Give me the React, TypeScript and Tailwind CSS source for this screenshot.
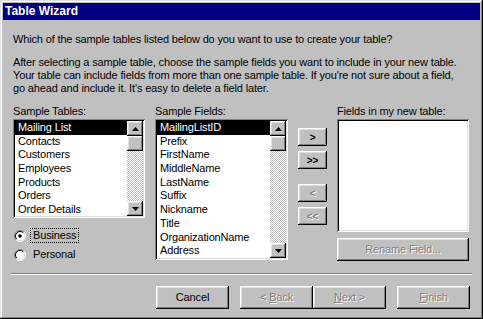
const raised =
  "bg-[#c0c0c0] shadow-[inset_-1px_-1px_#000,inset_1px_1px_#fff,inset_-2px_-2px_#808080,inset_2px_2px_#dfdfdf]";
const sunken =
  "shadow-[inset_1px_1px_#808080,inset_-1px_-1px_#fff,inset_2px_2px_#000,inset_-2px_-2px_#dfdfdf]";
const disabled = "text-[#808080] [text-shadow:1px_1px_0_#fff]";

const Tri = ({ up }: { up?: boolean }) => (
  <svg width="7" height="4" viewBox="0 0 7 4">
    {up ? <path d="M3.5 0 L7 4 L0 4 Z" fill="#000" /> : <path d="M0 0 L7 0 L3.5 4 Z" fill="#000" />}
  </svg>
);

const Scrollbar = () => (
  <div className="flex w-[16px] flex-col">
    <div className={`${raised} flex h-[15px] items-center justify-center`}>
      <Tri up />
    </div>
    <div className={`${raised} h-[15px]`} />
    <div className="flex-1 bg-[repeating-conic-gradient(#c0c0c0_0%_25%,#fff_0%_50%)] bg-[length:2px_2px]" />
    <div className={`${raised} flex h-[15px] items-center justify-center`}>
      <Tri />
    </div>
  </div>
);

const ListBox = ({ items, height }: { items: string[]; height: string }) => (
  <div className={`${sunken} flex bg-white p-[2px] ${height}`}>
    <div className="flex-1 overflow-hidden">
      {items.map((t, i) => (
        <div
          key={t}
          className={`h-[13.7px] pl-[3px] leading-[13.7px] ${i === 0 ? "bg-black text-white" : "text-black"}`}
        >
          {t}
        </div>
      ))}
    </div>
    <Scrollbar />
  </div>
);

const Radio = ({ checked }: { checked?: boolean }) => (
  <svg width="12" height="12" viewBox="0 0 12 12">
    <circle cx="6" cy="6" r="5" fill="#fff" />
    <path d="M2.1 9.9 A5.5 5.5 0 0 1 9.9 2.1" stroke="#808080" fill="none" />
    <path d="M9.9 2.1 A5.5 5.5 0 0 1 2.1 9.9" stroke="#fff" fill="none" />
    <path d="M2.8 9.2 A4.5 4.5 0 0 1 9.2 2.8" stroke="#000" fill="none" />
    <path d="M9.2 2.8 A4.5 4.5 0 0 1 2.8 9.2" stroke="#dfdfdf" fill="none" />
    {checked && <circle cx="6" cy="6" r="1.8" fill="#000" />}
  </svg>
);

const Btn = ({ children, off, className = "" }: { children: React.ReactNode; off?: boolean; className?: string }) => (
  <div className={`${raised} flex items-center justify-center ${off ? disabled : "text-black"} ${className}`}>
    {children}
  </div>
);

export default function App() {
  return (
    <div className="flex h-[319px] w-[483px] flex-col overflow-hidden whitespace-nowrap bg-[#c0c0c0] p-[3px] font-['Liberation_Sans',sans-serif] text-[11px] tracking-[-0.15px] text-black shadow-[inset_-1px_-1px_#000,inset_1px_1px_#dfdfdf,inset_-2px_-2px_#808080,inset_2px_2px_#fff]">
      <div className="h-[17px] shrink-0 bg-[#000080] pl-[2px] text-[12px] font-bold leading-[17px] tracking-normal text-white">
        Table Wizard
      </div>

      <div className="pl-[10px] leading-[13px]">
        <p className="mt-[13px]">Which of the sample tables listed below do you want to use to create your table?</p>
        <p className="mt-[10px]">
          After selecting a sample table, choose the sample fields you want to include in your new table.
          <br />
          Your table can include fields from more than one sample table. If you're not sure about a field,
          <br />
          go ahead and include it. It's easy to delete a field later.
        </p>

        <div className="mt-[10px] flex h-[157px]">
          <div className="w-[132px]">
            <div className="h-[14px]">Sample Tables:</div>
            <ListBox
              height="h-[99px]"
              items={["Mailing List", "Contacts", "Customers", "Employees", "Products", "Orders", "Order Details"]}
            />
            <div className="mt-[10px] flex h-[15px] items-center pl-[1px]">
              <Radio checked />
              <span className="ml-[4px] border border-dotted border-black px-[2px] leading-[13px]">Business</span>
            </div>
            <div className="mt-[4px] flex h-[15px] items-center pl-[1px]">
              <Radio />
              <span className="ml-[7px] leading-[13px]">Personal</span>
            </div>
          </div>

          <div className="ml-[10px] w-[133px]">
            <div className="h-[14px]">Sample Fields:</div>
            <ListBox
              height="h-[141px]"
              items={[
                "MailingListID",
                "Prefix",
                "FirstName",
                "MiddleName",
                "LastName",
                "Suffix",
                "Nickname",
                "Title",
                "OrganizationName",
                "Address",
              ]}
            />
          </div>

          <div className="ml-[10px] flex w-[29px] flex-col pt-[23px] text-[10px] font-bold">
            <Btn className="h-[18px]">&gt;</Btn>
            <Btn className="mt-[5px] h-[18px]">&gt;&gt;</Btn>
            <Btn off className="mt-[15px] h-[18px]">&lt;</Btn>
            <Btn off className="mt-[5px] h-[18px]">&lt;&lt;</Btn>
          </div>

          <div className="ml-[10px] w-[132px]">
            <div className="h-[14px]">Fields in my new table:</div>
            <div className={`${sunken} h-[113px] bg-white`} />
            <Btn off className="mt-[6px] h-[23px]">Rename Field...</Btn>
          </div>
        </div>
      </div>

      <div className="mx-[8px] mt-[11px] h-[2px] shrink-0 border-t border-b border-t-[#808080] border-b-white" />

      <div className="mt-[11px] flex justify-end pr-[10px]">
        <Btn className="h-[23px] w-[73px]">Cancel</Btn>
        <Btn off className="ml-[11px] h-[23px] w-[73px]">
          &lt;&nbsp;<u>B</u>ack
        </Btn>
        <Btn off className="h-[23px] w-[73px]">
          <u>N</u>ext&nbsp;&gt;
        </Btn>
        <Btn off className="ml-[11px] h-[23px] w-[73px]">
          <u>F</u>inish
        </Btn>
      </div>
    </div>
  );
}
